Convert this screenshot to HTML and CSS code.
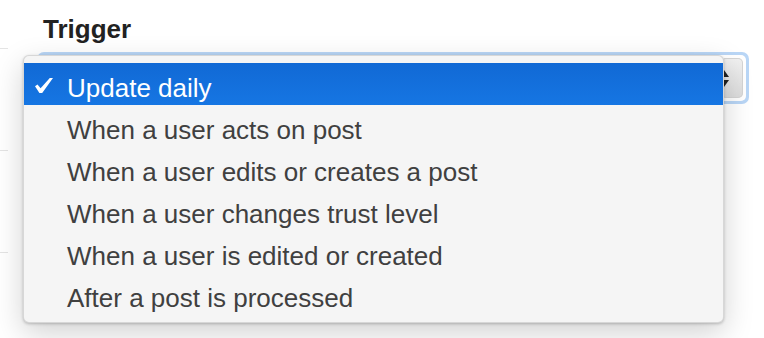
FILE: index.html
```html
<!DOCTYPE html>
<html lang="en">
<head>
	<meta charset="UTF-8">
	<title>Trigger</title>
	<link rel="stylesheet" href="styles.css">
</head>
<body>
	<div class="page">
		<div class="rules">
			<div class="rule"></div>
			<div class="rule"></div>
			<div class="rule"></div>
		</div>

		<div class="field">
			<label class="field-label" for="trigger">Trigger</label>
			<div class="select-ring">
				<div class="select">
					<span class="stepper">
						<span class="arrow-up"></span>
						<span class="arrow-down"></span>
					</span>
				</div>
			</div>
		</div>

		<!-- open native select popup -->
		<ul class="menu" id="trigger">
			<li class="item selected">
				<svg class="check" width="18" height="15" viewBox="0 0 18 15">
					<path d="M0 8.3 L2.5 6.6 L5.6 10.3 L14.8 0 L18 0 L7.2 15 L4.4 15 Z" fill="#fff"/>
				</svg>
				Update daily
			</li>
			<li class="item">When a user acts on post</li>
			<li class="item">When a user edits or creates a post</li>
			<li class="item">When a user changes trust level</li>
			<li class="item">When a user is edited or created</li>
			<li class="item">After a post is processed</li>
		</ul>
	</div>
</body>
</html>
```

FILE: styles.css
```css
* {
	box-sizing: border-box;
	margin: 0;
	padding: 0;
}

body {
	background: #fff;
	font-family: "Liberation Sans", Arial, sans-serif;
}

.page {
	position: relative;
	width: 764px;
	height: 338px;
	display: flex;
}

/* faint table rules peeking out on the left */
.rules {
	width: 8px;
	padding-top: 48px;
	display: flex;
	flex-direction: column;
	gap: 101px;
}
.rule {
	height: 1px;
	background: #e4e4e4;
}

.field {
	padding-top: 14px;
	padding-left: 29px;
}

.field-label {
	display: block;
	padding-left: 6px;
	font-size: 26px;
	font-weight: bold;
	color: #222;
	line-height: 30px;
}

.select-ring {
	margin-top: 8px;
	width: 712px;
	height: 52px;
	padding: 3px;
	border-radius: 7px;
	background: #b9d6f6;
}

.select {
	height: 100%;
	border-radius: 5px;
	background: #fff;
	display: flex;
	justify-content: flex-end;
	padding: 3px 3px;
}

.stepper {
	width: 22px;
	border-radius: 5px;
	background: linear-gradient(#f1f1f1, #dcdcdc);
	box-shadow: inset 0 0 0 1px #d4d4d4;
	display: flex;
	flex-direction: column;
	justify-content: center;
	align-items: flex-start;
	gap: 3px;
}

.arrow-up,
.arrow-down {
	width: 0;
	height: 0;
	border-left: 5px solid transparent;
	border-right: 5px solid transparent;
	margin-left: -2px;
}
.arrow-up {
	border-bottom: 7px solid #222;
}
.arrow-down {
	border-top: 7px solid #222;
}

.menu {
	position: absolute;
	left: 23px;
	top: 55px;
	width: 701px;
	height: 268px;
	padding: 7px 0;
	list-style: none;
	background: #f5f5f5;
	border-radius: 6px;
	border: 1px solid rgba(0, 0, 0, 0.12);
	box-shadow: 0 10px 30px rgba(0, 0, 0, 0.18), 0 1px 3px rgba(0, 0, 0, 0.22);
}

.item {
	position: relative;
	height: 42px;
	padding-left: 43px;
	padding-top: 4px;
	line-height: 42px;
	font-size: 26px;
	color: #404040;
	white-space: nowrap;
}

.item.selected {
	background: linear-gradient(#1169d5, #1676e3);
	color: #fff;
}

.check {
	position: absolute;
	left: 11px;
	top: 15px;
}
```
